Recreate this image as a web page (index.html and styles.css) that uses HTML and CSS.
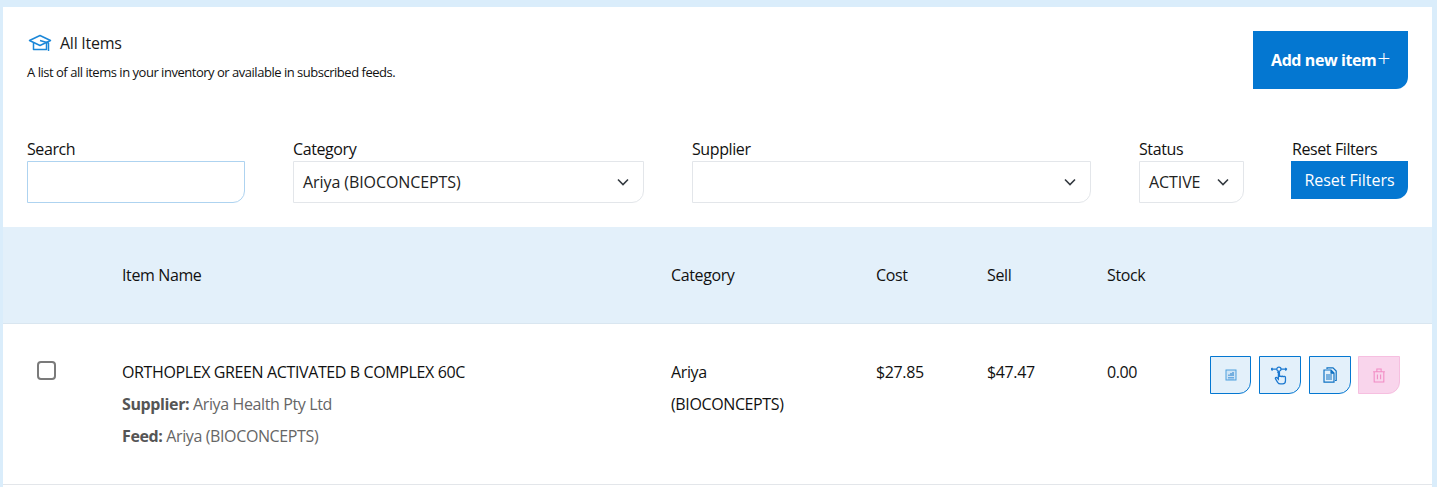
FILE: index.html
```html
<!DOCTYPE html>
<html lang="en">
<head>
<meta charset="utf-8">
<title>All Items</title>
<link rel="stylesheet" href="styles.css">
</head>
<body>
<main class="card">
  <header class="head">
    <div>
      <h1 class="title">
        <svg class="cap" viewBox="0 0 24 18" width="24" height="18" fill="none" stroke="#1b87d8" stroke-width="1.5" stroke-linejoin="round"><path d="M1.500 6.500 12 1.500l10.500 5L12 11.500z"/><path d="M5.500 9v6.500h13V9"/><path d="M12 6.500l8.500 2.500v8"/></svg>
        All Items
      </h1>
      <p class="sub">A list of all items in your inventory or available in subscribed feeds.</p>
    </div>
    <button class="btn add">Add new item<span class="plus">+</span></button>
  </header>
  <section class="filters">
    <div class="field f-search"><label>Search</label><div class="ctl search"></div></div>
    <div class="field f-cat"><label>Category</label><div class="ctl">Ariya (BIOCONCEPTS)<svg class="chev" viewBox="0 0 12 8" width="12" height="8"><path d="M1 1.500 6 6.500l5-5" fill="none" stroke="#343a40" stroke-width="1.600"/></svg></div></div>
    <div class="field f-sup"><label>Supplier</label><div class="ctl"><svg class="chev" viewBox="0 0 12 8" width="12" height="8"><path d="M1 1.500 6 6.500l5-5" fill="none" stroke="#343a40" stroke-width="1.600"/></svg></div></div>
    <div class="field f-status"><label>Status</label><div class="ctl">ACTIVE<svg class="chev" viewBox="0 0 12 8" width="12" height="8"><path d="M1 1.500 6 6.500l5-5" fill="none" stroke="#343a40" stroke-width="1.600"/></svg></div></div>
    <div class="field f-reset"><label>Reset Filters</label><button class="btn reset">Reset Filters</button></div>
  </section>
  <div class="row thead">
    <div></div><div>Item Name</div><div>Category</div><div>Cost</div><div>Sell</div><div>Stock</div><div></div>
  </div>
  <div class="row tbody">
    <div><span class="check"></span></div>
    <div>
      <div class="name">ORTHOPLEX GREEN ACTIVATED B COMPLEX 60C</div>
      <div class="meta"><b>Supplier:</b> Ariya Health Pty Ltd</div>
      <div class="meta"><b>Feed:</b> Ariya (BIOCONCEPTS)</div>
    </div>
    <div class="cat">Ariya<br>(BIOCONCEPTS)</div>
    <div>$27.85</div>
    <div>$47.47</div>
    <div>0.00</div>
    <div class="actions">
      <span class="act a1"><svg viewBox="0 0 12 12" width="12" height="12"><rect x="1" y="1" width="10" height="10" fill="#cfe4f5" stroke="#4f9fdd"/><path d="M3 8.500h6M3 10h6" stroke="#6aabe2" fill="none"/><path d="M4 7V5.500M6 7V4M8 7V3" stroke="#1b78c8" fill="none"/></svg></span>
      <span class="act a2"><svg viewBox="0 0 18 18" width="19" height="19" fill="none" stroke="#1b78d0" stroke-width="1.200"><path d="M0 3h15M0 3l1.500-1.200M0 3l1.500 1.200M15 3l-1.500-1.200M15 3l-1.500 1.200"/><circle cx="7.500" cy="3" r="2" fill="#e3f0fa"/><path d="M7 6v6.500L5.500 11c-1-.7-1.800.3-1.200 1.200l2 3.300c.6.900 1.400 1.500 2.700 1.500h2c1.700 0 2.700-1.200 2.700-3v-3c0-1.300-1.800-1.400-2-.4 0-1.100-1.700-1.200-2-.2 0-1-1.700-1-1.700 0V6c0-1.300-1.500-1.300-1.500 0z" fill="#e3f0fa"/></svg></span>
      <span class="act a3"><svg viewBox="0 0 14 16" width="14" height="16" fill="none" stroke="#1173c4" stroke-width="1.200"><path d="M4 2V.8h6l3.200 3.200v9.500H12"/><path d="M1 3h7l3 3v9.200H1z" fill="#e3f0fa"/><path d="M3 8h6M3 10h6M3 12h6"/><path d="M8 3.200v3h3" fill="#1173c4"/></svg></span>
      <span class="act a4"><svg viewBox="0 0 12 14" width="14" height="15" fill="none" stroke="#f28cc4" stroke-width="1"><path d="M.5 3.500h11M4 3.500V1h4v2.500M1.500 3.500v9.500h9V3.500M4.500 6v4.500M7.500 6v4.500"/></svg></span>
    </div>
  </div>
</main>
</body>
</html>
```
FILE: styles.css
```css
* { box-sizing: border-box; }
html, body { margin: 0; height: 487px; overflow: hidden; }
body {
  background: #daedfb;
  padding: 7px 5px 0 3px;
  font-family: "Open Sans", "Noto Sans", sans-serif;
  color: #111;
  font-size: 14px;
}
.card { background: #fff; height: 480px; }
.head { display: flex; justify-content: space-between; align-items: flex-start; padding: 24px 24px 0 24px; height: 133px; }
.title { display: flex; align-items: center; gap: 8px; margin: 1px 0 0; font-size: 16px; letter-spacing: -0.25px; font-weight: 400; line-height: 22px; color: #1a1a1a; }
.cap { flex: none; margin-left: 1px; margin-top: -1px; }
.sub { margin: 9px 0 0; font-size: 13px; letter-spacing: -0.48px; line-height: 18px; color: #111; }
.btn { border: 0; background: #0477d1; color: #fff; font-family: inherit; border-bottom-right-radius: 12px; padding: 0; }
.add { width: 155px; height: 58px; font-size: 16px; letter-spacing: -0.42px; font-weight: 700; display: flex; align-items: center; justify-content: center; }
.plus { font-weight: 300; font-size: 23px; line-height: 20px; margin-left: 1px; margin-top: -4px; }
.filters { display: flex; padding: 0 24px; height: 87px; align-items: flex-start; }
.field { flex: none; }
.field label { display: block; font-size: 16px; letter-spacing: -0.4px; line-height: 19px; margin-bottom: 2px; color: #111; }
.f-search { width: 218px; margin-right: 48px; }
.f-cat { width: 351px; margin-right: 48px; }
.f-sup { width: 399px; margin-right: 48px; }
.f-status { width: 105px; margin-right: 47px; }
.f-reset { width: 117px; }
.f-reset label { margin-left: 1px; }
.ctl { height: 42px; border: 1px solid #e3e6ea; border-bottom-right-radius: 12px; display: flex; align-items: center; justify-content: space-between; padding: 0 14px 0 9px; font-size: 16px; letter-spacing: -0.08px; color: #222; }
.search { border-color: #aed3f0; }
.chev { flex: none; margin-left: auto; }
.reset { width: 117px; height: 38px; font-size: 16px; letter-spacing: -0.04px; display: block; }
.row { display: grid; grid-template-columns: 119px 549px 205px 111px 120px 103px 1fr; }
.thead { background: #e3f0fa; height: 97px; align-items: center; border-bottom: 1px solid #d9e6f0; font-size: 16px; letter-spacing: -0.38px; color: #111; }
.tbody { height: 161px; border-bottom: 1px solid #e3e6ea; padding-top: 32px; font-size: 16px; letter-spacing: -0.38px; line-height: 32px; }
.check { display: block; width: 19px; height: 19px; border: 2px solid #7a7a7a; border-radius: 4px; margin: 5px 0 0 34px; }
.name { color: #111; }
.meta { color: #666; }
.meta b { font-weight: 700; color: #555; }
.actions { display: flex; gap: 8px; }
.act { width: 42px; height: 38px; border: 1px solid #0477d1; background: #e3f0fa; border-bottom-right-radius: 12px; display: flex; align-items: center; justify-content: center; }
.a1 { width: 41px; }
.a4 { background: #f9d5ec; border-color: #f6bfe0; margin-left: -1px; }
```
